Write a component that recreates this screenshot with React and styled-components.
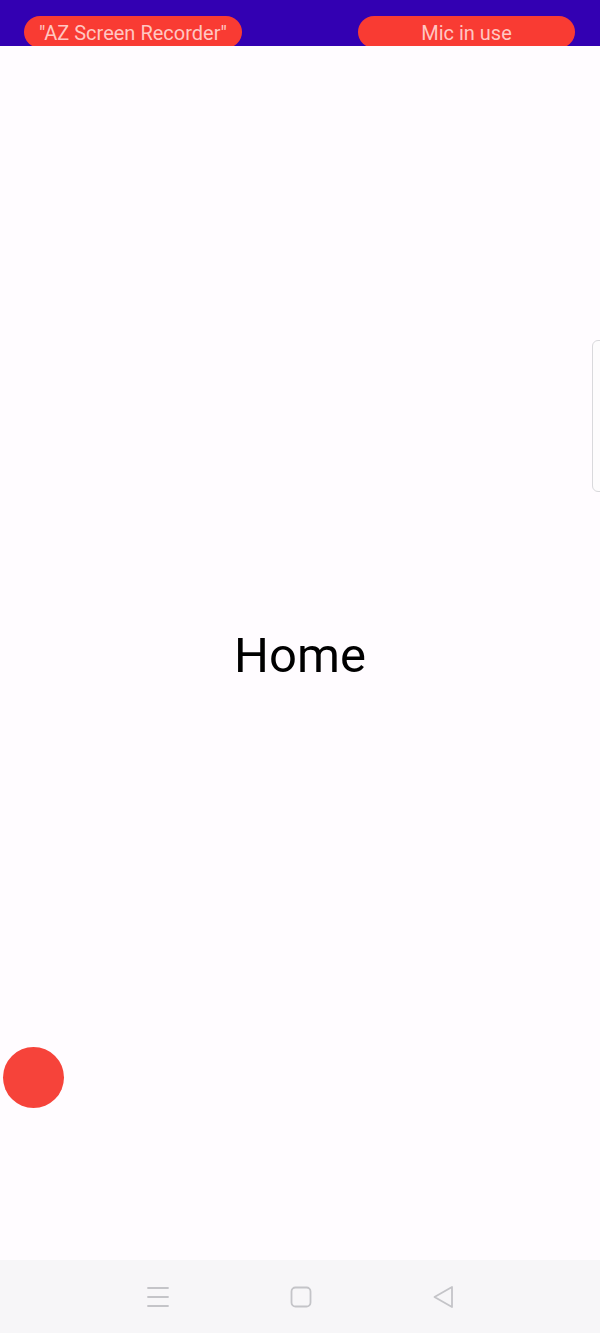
import React from "react";
import styled, { createGlobalStyle } from "styled-components";

const Global = createGlobalStyle`
  html, body {
    margin: 0;
    padding: 0;
  }
  body {
    font-family: Roboto, "Noto Sans", sans-serif;
    background: #fffcff;
  }
`;

const Screen = styled.div`
  position: relative;
  width: 600px;
  height: 1333px;
  display: flex;
  flex-direction: column;
  overflow: hidden;
`;

const StatusBar = styled.div`
  height: 46px;
  flex-shrink: 0;
  background: #3300b2;
  display: flex;
  justify-content: space-between;
  align-items: flex-start;
  padding: 16px 25px 0 24px;
  box-sizing: border-box;
  overflow: hidden;
`;

const Pill = styled.div`
  width: ${(p) => p.width}px;
  height: 32px;
  border-radius: 16px;
  background: #f93b33;
  color: #ffc7c2;
  font-size: 20px;
  line-height: 34px;
  text-align: center;
`;

const Content = styled.main`
  flex: 1;
  display: flex;
  align-items: center;
  justify-content: center;
  padding-top: 4px;
`;

const Title = styled.h1`
  margin: 0;
  font-weight: 400;
  font-size: 49px;
  color: #000;
`;

const NavBar = styled.nav`
  height: 73px;
  flex-shrink: 0;
  background: #f7f6f8;
  display: flex;
  justify-content: center;
  align-items: center;
  gap: 115px;
  padding: 0 0 0 2px;
`;

const NavIcon = styled.svg`
  width: 28px;
  height: 28px;
  fill: none;
  stroke: #c4c4c8;
  stroke-width: 1.8;
  stroke-linecap: round;
  stroke-linejoin: round;
`;

const FloatingDot = styled.div`
  position: absolute;
  left: 3px;
  top: 1047px;
  width: 61px;
  height: 61px;
  border-radius: 50%;
  background: #f6433a;
`;

const EdgeHandle = styled.div`
  position: absolute;
  right: -8px;
  top: 340px;
  width: 14px;
  height: 150px;
  border: 1px solid #d9d9dc;
  border-radius: 6px;
  background: #fdfcfd;
`;

export default function App() {
  return (
    <>
      <Global />
      <Screen>
        <StatusBar>
          <Pill width={218}>"AZ Screen Recorder"</Pill>
          <Pill width={217}>Mic in use</Pill>
        </StatusBar>
        <Content>
          <Title>Home</Title>
        </Content>
        <NavBar>
          <NavIcon viewBox="0 0 28 28">
            <path d="M4 5h20M4 14h20M4 23h20" />
          </NavIcon>
          <NavIcon viewBox="0 0 28 28">
            <rect x="4.5" y="4.5" width="19" height="19" rx="4" />
          </NavIcon>
          <NavIcon viewBox="0 0 28 28">
            <path d="M22 4v20L4.5 14z" />
          </NavIcon>
        </NavBar>
        <FloatingDot />
        <EdgeHandle />
      </Screen>
    </>
  );
}
